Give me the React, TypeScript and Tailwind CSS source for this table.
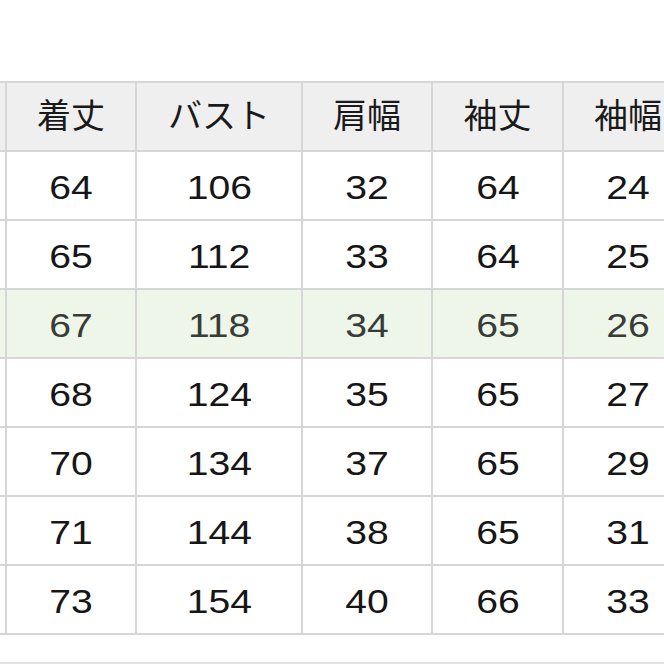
const headers = ['着丈', 'バスト', '肩幅', '袖丈', '袖幅']

const rows: string[][] = [
  ['64', '106', '32', '64', '24'],
  ['65', '112', '33', '64', '25'],
  ['67', '118', '34', '65', '26'],
  ['68', '124', '35', '65', '27'],
  ['70', '134', '37', '65', '29'],
  ['71', '144', '38', '65', '31'],
  ['73', '154', '40', '66', '33'],
]

const widths = ['w-[130px]', 'w-[166px]', 'w-[130px]', 'w-[131px]', 'w-[130px]']

export default function App() {
  return (
    <div className="w-[664px] h-[664px] overflow-hidden bg-white pt-[81px] relative" style={{ fontFamily: '"Liberation Sans", "Noto Sans CJK JP", sans-serif' }}>
      <table className="border-collapse table-fixed w-[693px]">
        <thead>
          <tr className="h-[69px] bg-[#efefef]">
            <th className="w-[6px] border-2 border-l-0 border-[#d6d6d6]" />
            {headers.map((h, i) => (
              <th key={h} className={`${widths[i]} border-2 border-[#d6d6d6] text-[34px] font-normal text-[#1a1a1a] text-center`}>
                {h}
              </th>
            ))}
          </tr>
        </thead>
        <tbody>
          {rows.map((r, ri) => {
            const hl = ri === 2
            return (
              <tr key={ri} className={hl ? 'h-[69px] bg-[#edf6e9]' : 'h-[69px] bg-white'}>
                <td className={hl ? 'border-2 border-l-0 border-[#d6d6d6] bg-[#edf6e9]' : 'border-2 border-l-0 border-[#d6d6d6]'} />
                {r.map((v, ci) => (
                  <td key={ci} className={hl ? 'border-2 border-[#d6d6d6] text-center text-[34px] text-[#383c38] pt-[3px]' : 'border-2 border-[#d6d6d6] text-center text-[34px] text-[#161616] pt-[3px]'}>
                    <span className="inline-block scale-x-[1.15]">{v}</span>
                  </td>
                ))}
              </tr>
            )
          })}
        </tbody>
      </table>
      <div className="absolute left-0 right-0 bottom-0 h-[2px] bg-[#e2e2e2]" />
    </div>
  )
}
